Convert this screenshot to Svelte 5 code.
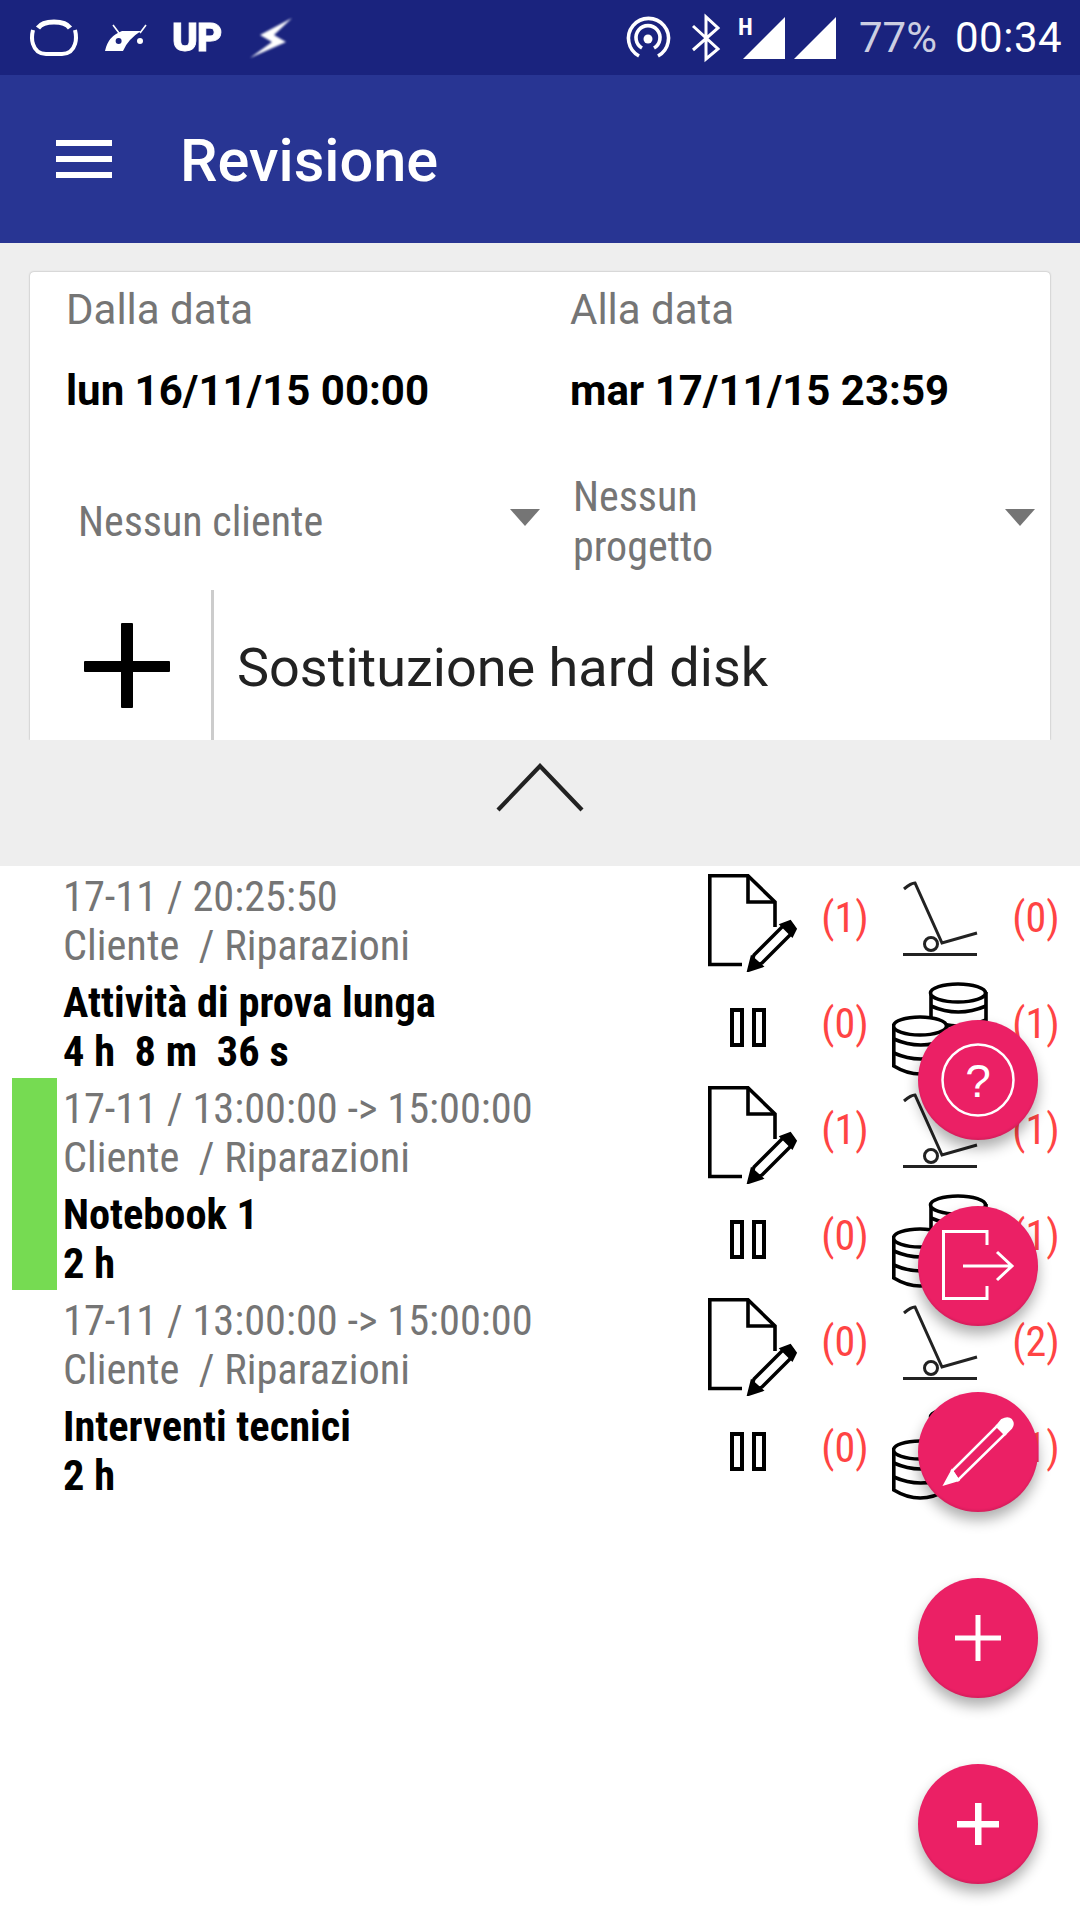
<script>
  const rows = [
    { time: '17-11 / 20:25:50', title: 'Attività di prova lunga', dur: '4 h  8 m  36 s', counts: [1, 0, 0, 1], active: false },
    { time: '17-11 / 13:00:00 -> 15:00:00', title: 'Notebook 1', dur: '2 h', counts: [1, 1, 0, 1], active: true },
    { time: '17-11 / 13:00:00 -> 15:00:00', title: 'Interventi tecnici', dur: '2 h', counts: [0, 2, 0, 1], active: false }
  ];
  const fabs = ['help', 'exit', 'edit', 'plus', 'plus2'];
</script>

{#snippet docIcon()}
  <svg width="90" height="98" viewBox="0 0 90 98" fill="none" stroke="#000" stroke-width="3.6">
    <path d="M34 90.500H1.800V1.800H40L67 28V53" />
    <path d="M40 1.800V28H67" />
    <path d="M42 94l4-13 30-30q4-3 8 0 3 4 0 8L54 89z" stroke-width="3.4" stroke-linejoin="round" />
    <path d="M41 96l3-12 9 8z" fill="#000" />
    <path d="M74 51l10 10 3-6-5-7z" fill="#000" />
  </svg>
{/snippet}

{#snippet cartIcon()}
  <svg width="78" height="78" viewBox="0 0 78 78" fill="none" stroke="#222" stroke-width="3">
    <path d="M2 9q7-6 11-6l27 60 35-10" />
    <circle cx="29" cy="64" r="6.500" />
    <path d="M1 74.500H75" />
  </svg>
{/snippet}

{#snippet pauseIcon()}
  <svg width="38" height="40" viewBox="0 0 38 40" fill="none" stroke="#000" stroke-width="4">
    <rect x="2" y="2" width="10" height="35" />
    <rect x="24" y="2" width="10" height="35" />
  </svg>
{/snippet}

{#snippet coinsIcon()}
  <svg width="98" height="98" viewBox="0 0 98 98" fill="#fff" stroke="#000" stroke-width="3.6">
    <path d="M39 10V52Q66 62 94 52V10" />
    <path d="M39 24q27 12 55 0M39 38q27 12 55 0" fill="none" />
    <ellipse cx="66" cy="11" rx="27.500" ry="9" />
    <path d="M1.800 44V84Q28 100 55 84V44" />
    <path d="M1.800 57q27 12 54 0M1.800 71q27 12 54 0" fill="none" />
    <ellipse cx="28" cy="44" rx="26.500" ry="9" />
  </svg>
{/snippet}

<div class="screen">
  <div class="statusbar">
    <svg class="st-left" width="300" height="75" viewBox="0 0 300 75">
      <g fill="none" stroke="#fff" stroke-width="4">
        <path d="M38 28Q42 22 54 22T70 28" stroke-width="5" />
        <path d="M33 30Q31 38 33 44 36 54 46 54H62Q72 54 75 44 77 38 75 30" />
      </g>
      <path d="M105 51Q108 36 122 31L141 31Q128 39 123 51Z" fill="#fff" />
      <path d="M113 25l6 8M146 25l-6 8" stroke="#fff" stroke-width="1.600" />
      <circle cx="118.600" cy="41" r="3" fill="#1a237e" />
      <circle cx="140" cy="41" r="3" fill="#fff" />
      <text x="172" y="51" class="up">UP</text>
      <path d="M292 18 260 35 272 42 250 58 286 42 274 35Z" fill="#fff" class="soft" />
    </svg>
    <svg class="st-right" width="220" height="75" viewBox="620 0 220 75">
      <g fill="none" stroke="#fff" stroke-width="3.600">
        <path d="M639 56A20 20 0 1 1 658 56" />
        <path d="M642 48A12 12 0 1 1 654 48" />
        <path d="M693 50 718 28 706 17V59L718 49 693 26" stroke-width="3" />
      </g>
      <circle cx="648" cy="39" r="4.500" fill="#fff" />
      <text x="738" y="35" class="h">H</text>
      <path d="M743 59 785 17V59ZM794 59 836 17V59Z" fill="#fff" />
    </svg>
    <span class="batt">77%</span>
    <span class="clock">00:34</span>
  </div>

  <header class="appbar">
    <span class="burger"><i></i><i></i><i></i></span>
    <h1>Revisione</h1>
  </header>

  <section class="filters">
    <div class="card">
      <div class="dates">
        <div class="date">
          <span class="label">Dalla data</span>
          <strong>lun 16/11/15 00:00</strong>
        </div>
        <div class="date">
          <span class="label">Alla data</span>
          <strong>mar 17/11/15 23:59</strong>
        </div>
      </div>
      <div class="selects">
        <div class="select first">
          <span class="sel-text">Nessun cliente</span>
          <span class="caret"></span>
        </div>
        <div class="select second">
          <span class="sel-text">Nessun<br />progetto</span>
          <span class="caret"></span>
        </div>
      </div>
      <div class="entry">
        <span class="add"></span>
        <span class="entry-text">Sostituzione hard disk</span>
      </div>
    </div>
    <div class="toggle">
      <svg width="90" height="50" viewBox="0 0 90 50" fill="none" stroke="#222" stroke-width="4.200">
        <path d="M3 47 45 3 87 47" />
      </svg>
    </div>
  </section>

  <ul class="list">
    {#each rows as row}
      <li class="row">
        <span class="bar" class:on={row.active}></span>
        <div class="info">
          <span class="line muted">{row.time}</span>
          <span class="line muted">Cliente  / Riparazioni</span>
          <span class="line bold gap">{row.title}</span>
          <span class="line bold">{row.dur}</span>
        </div>
        <div class="stats">
          <span class="ico doc">{@render docIcon()}</span>
          <span class="count">({row.counts[0]})</span>
          <span class="ico">{@render cartIcon()}</span>
          <span class="count">({row.counts[1]})</span>
          <span class="ico pause">{@render pauseIcon()}</span>
          <span class="count">({row.counts[2]})</span>
          <span class="ico coins">{@render coinsIcon()}</span>
          <span class="count">({row.counts[3]})</span>
        </div>
      </li>
    {/each}
  </ul>

  <div class="fabs">
    {#each fabs as fab}
      <button class="fab" aria-label={fab}>
        {#if fab === 'help'}
          <svg width="76" height="76" viewBox="0 0 76 76" fill="none" stroke="#fff" stroke-width="2.500">
            <circle cx="38" cy="38" r="35.500" />
            <text x="38" y="55" class="q">?</text>
          </svg>
        {:else if fab === 'exit'}
          <svg width="76" height="76" viewBox="0 0 76 76" fill="none" stroke="#fff" stroke-width="3">
            <path d="M47 17V3.500H3.500V70.500H47V58" />
            <path d="M23 38H72M57 24 72 38 57 52" />
          </svg>
        {:else if fab === 'edit'}
          <svg width="76" height="76" viewBox="0 0 76 76" fill="none" stroke="#fff" stroke-width="2.500">
            <path d="M12 57 57 12 65 20 18 66Z" />
            <path d="M12 57 5 70 18 66Z" fill="#fff" />
            <path d="M57 12 62 6Q68 3 71 6 74 10 71 14L65 20Z" fill="#fff" />
          </svg>
        {:else if fab === 'plus'}
          <svg width="46" height="46" viewBox="0 0 46 46" fill="#fff"><path d="M20.500 0h5v46h-5zM0 20.500h46v5H0z" /></svg>
        {:else}
          <svg width="42" height="42" viewBox="0 0 42 42" fill="#fff"><path d="M18 0h6.500v42H18zM0 18h42v6.500H0z" /></svg>
        {/if}
      </button>
    {/each}
  </div>
</div>

<style>
  :global(body) { margin: 0; background: #fff; }
  .screen {
    position: relative;
    width: 1080px;
    height: 1920px;
    overflow: hidden;
    background: #fff;
    font-family: Roboto, "Liberation Sans", sans-serif;
  }
  .statusbar {
    display: flex;
    align-items: center;
    height: 75px;
    background: #1a237e;
    color: #fff;
    font-size: 42px;
  }
  .st-left { margin-right: 320px; }
  .up { font-size: 39px; font-weight: 900; fill: #fff; stroke: #fff; stroke-width: .8px; letter-spacing: -1px; filter: blur(.5px); }
  .soft { filter: blur(.8px); }
  .h { font-size: 24px; font-weight: 700; fill: #fff; font-stretch: 75%; }
  .batt { margin-left: 19px; width: 96px; color: rgba(255, 255, 255, .78); }
  .clock { letter-spacing: .5px; }
  .appbar {
    display: flex;
    align-items: center;
    height: 168px;
    background: #283593;
    color: #fff;
  }
  .burger { display: flex; flex-direction: column; gap: 10px; margin-left: 56px; width: 56px; }
  .burger i { display: block; height: 6px; background: #fff; }
  h1 { margin: 4px 0 0 68px; font-size: 59.5px; font-weight: 500; }
  .filters { height: 623px; background: #eee; padding: 29px 30px 0; box-sizing: border-box; }
  .card {
    height: 468px;
    background: #fff;
    border-radius: 4px 4px 0 0;
    box-shadow: 0 0 2px rgba(0, 0, 0, .35);
    clip-path: inset(-3px -3px 0 -3px);
    display: flex;
    flex-direction: column;
    overflow: hidden;
  }
  .dates { display: flex; height: 158px; }
  .date { width: 504px; padding-left: 36px; box-sizing: border-box; display: flex; flex-direction: column; }
  .label { font-size: 42px; line-height: 50px; margin-top: 13px; color: #757575; }
  .date strong { font-size: 42px; line-height: 50px; margin-top: 31px; color: #000; font-weight: 700; white-space: nowrap; }
  .selects { display: flex; height: 160px; padding-top: 24px; box-sizing: border-box; }
  .select { display: flex; align-items: center; color: #757575; font-size: 42px; line-height: 50px; font-stretch: 75%; }
  .select.first { width: 515px; padding-left: 48px; box-sizing: border-box; }
  .select.second { flex: 1; padding-left: 28px; }
  .sel-text { flex: 1; }
  .caret {
    width: 0;
    height: 0;
    margin-top: -10px;
    border-left: 15px solid transparent;
    border-right: 15px solid transparent;
    border-top: 17px solid #757575;
  }
  .select.first .caret { margin-right: 5px; }
  .select.second .caret { margin-right: 15px; }
  .entry { display: flex; flex: 1; align-items: center; }
  .add {
    position: relative;
    width: 181px;
    height: 100%;
    border-right: 3px solid #ccc;
  }
  .add::before, .add::after { content: ''; position: absolute; background: #000; border-radius: 1px; }
  .add::before { left: 54px; top: 71px; width: 86px; height: 11px; }
  .add::after { left: 91px; top: 33px; width: 12px; height: 85px; }
  .entry-text { margin: 4px 0 0 23px; font-size: 54px; color: #222; }
  .toggle { display: flex; justify-content: center; margin-top: 23px; }
  .list { margin: 0; padding: 0; list-style: none; }
  .row { display: flex; height: 212px; }
  .bar { width: 45px; margin-left: 12px; flex: none; }
  .bar.on { background: #76db52; }
  .info { flex: 1; padding: 6px 0 0 6px; display: flex; flex-direction: column; }
  .line { display: block; font-size: 42.4px; line-height: 49px; white-space: pre; font-stretch: 75%; }
  .muted { color: #757575; }
  .bold { color: #000; font-weight: 700; }
  .gap { margin-top: 8px; }
  .stats {
    width: 366px;
    margin-right: 14px;
    display: grid;
    grid-template-columns: 115px 60px 131px 60px;
    grid-template-rows: 106px 106px;
    align-items: center;
    justify-items: center;
  }
  .ico { display: flex; }
  .ico.doc { margin: 8px 10px 0 0; }
  .ico.pause { margin: 6px 18px 0 0; }
  .ico.coins { margin-top: 12px; }
  .count { font-size: 42px; color: #ff4444; font-stretch: 75%; margin-top: -3px; }
  .fabs {
    position: absolute;
    right: 42px;
    top: 1020px;
    display: flex;
    flex-direction: column;
    gap: 66px;
  }
  .fab {
    width: 120px;
    height: 120px;
    padding: 0;
    border: 0;
    border-radius: 50%;
    background: #eb2065;
    box-shadow: 0 8px 14px rgba(0, 0, 0, .32), inset 0 -2px 2px rgba(0, 0, 0, .08);
    display: flex;
    align-items: center;
    justify-content: center;
  }
  .q { font-size: 46px; font-weight: 500; fill: #fff; stroke: none; text-anchor: middle; }
</style>
